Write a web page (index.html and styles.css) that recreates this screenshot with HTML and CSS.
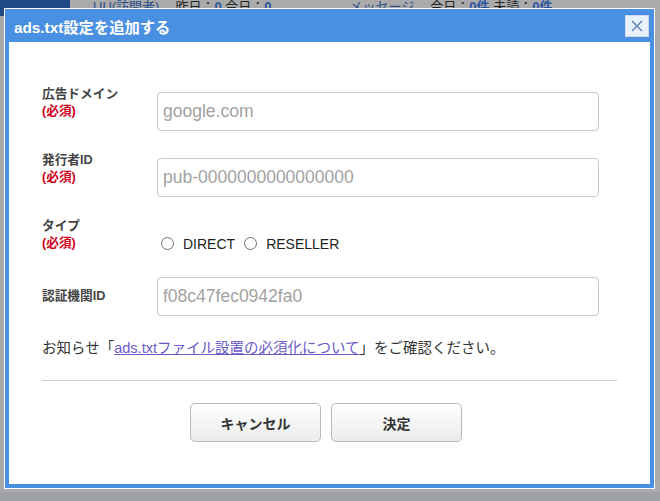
FILE: index.html
```html
<!DOCTYPE html>
<html lang="ja">
<head>
<meta charset="utf-8">
<title>ads.txt設定を追加する</title>
<link rel="stylesheet" href="styles.css">
</head>
<body>
<div class="page">
  <div class="topbar">
    <div class="brand"></div>
    <div class="stat stat-uu"><a class="stat-link">UU(訪問者)</a><span class="stat-val">昨日：<b>0</b> 今日：<b>0</b></span></div>
    <div class="stat stat-msg"><a class="stat-link">メッセージ</a><span class="stat-val">今日：<b>0件</b> 未読：<b>0件</b></span></div>
  </div>
  <div class="page-body"></div>
  <div class="footer-band"></div>
</div>

<div class="dialog">
  <div class="dialog-header">
    <div class="dialog-title">ads.txt設定を追加する</div>
    <button class="dialog-close" aria-label="閉じる">
      <svg width="12" height="12" viewBox="0 0 12 12"><path d="M1 1L11 11M11 1L1 11" stroke="#5f87b7" stroke-width="1.5" fill="none"/></svg>
    </button>
  </div>
  <div class="dialog-body">
    <div class="form">
      <div class="form-row">
        <div class="field-label is-required">広告ドメイン<span class="req">(必須)</span></div>
        <input class="field-input" type="text" placeholder="google.com">
      </div>
      <div class="form-row">
        <div class="field-label is-required">発行者ID<span class="req">(必須)</span></div>
        <input class="field-input" type="text" placeholder="pub-0000000000000000">
      </div>
      <div class="form-row type-row">
        <div class="field-label is-required">タイプ<span class="req">(必須)</span></div>
        <div class="radio-group">
          <label class="radio-option"><input class="radio" type="radio" name="type">DIRECT</label>
          <label class="radio-option"><input class="radio" type="radio" name="type">RESELLER</label>
        </div>
      </div>
      <div class="form-row last">
        <div class="field-label">認証機関ID</div>
        <input class="field-input" type="text" placeholder="f08c47fec0942fa0">
      </div>
    </div>
    <p class="notice">お知らせ「<a class="notice-link" href="#">ads.txtファイル設置の必須化について</a>」をご確認ください。</p>
    <hr class="divider">
    <div class="actions">
      <button class="btn">キャンセル</button>
      <button class="btn">決定</button>
    </div>
  </div>
</div>
</body>
</html>
```

FILE: styles.css
```css
html, body {
  margin: 0;
  padding: 0;
}

body {
  width: 660px;
  height: 501px;
  overflow: hidden;
  position: relative;
  background: #aaaaaa;
  font-family: "Liberation Sans", "Noto Sans CJK JP", sans-serif;
}

.page {
  height: 501px;
  display: flex;
  flex-direction: column;
}

.topbar {
  height: 16px;
  display: flex;
  align-items: flex-start;
  font-size: 13px;
  line-height: 14px;
  white-space: nowrap;
}

.brand {
  width: 70px;
  height: 16px;
  background: #1f4a86;
}

.stat-uu {
  margin-left: 23px;
}

.stat-msg {
  margin-left: 78px;
}

.stat-link {
  color: #2c4f88;
  text-decoration: underline;
}

.stat-val {
  margin-left: 16px;
  color: #222;
}

.stat-val b {
  color: #2a55a0;
  font-weight: bold;
}

.page-body {
  flex: 1;
}

.footer-band {
  height: 9px;
  background: #9da1a5;
}

/* dialog */
.dialog {
  position: absolute;
  left: 4px;
  top: 8px;
  width: 651px;
  height: 481px;
  box-sizing: border-box;
  border: 1px solid #ffffff;
  background: #4a90e2;
  padding: 0 4px 4px;
  display: flex;
  flex-direction: column;
}

.dialog-header {
  height: 33px;
  flex: none;
  display: flex;
  align-items: center;
  justify-content: space-between;
  padding-left: 5px;
}

.dialog-title {
  color: #ffffff;
  font-size: 15.3px;
  font-weight: bold;
}

.dialog-close {
  width: 24px;
  height: 22px;
  margin-right: 1px;
  padding: 0;
  box-sizing: border-box;
  border: 1px solid #cddbeb;
  background: #e8f0fa;
  display: flex;
  align-items: center;
  justify-content: center;
}

.dialog-body {
  flex: 1;
  background: #ffffff;
  padding: 50px 33px 0;
}

.form-row {
  display: flex;
  align-items: center;
  height: 39px;
  margin-bottom: 27px;
}

.form-row.type-row {
  margin-bottom: 14px;
}

.form-row.last {
  margin-bottom: 0;
}

.field-label {
  width: 115px;
  flex: none;
  font-size: 12.7px;
  line-height: 17px;
  font-weight: bold;
  color: #444444;
}

.field-label.is-required {
  align-self: flex-start;
  margin-top: -6px;
}

.req {
  display: block;
  color: #d0021b;
}

.field-input {
  width: 442px;
  height: 39px;
  box-sizing: border-box;
  margin: 0;
  border: 1px solid #c9c9c9;
  border-radius: 4px;
  padding: 0 5px;
  font-family: "Liberation Sans", sans-serif;
  font-size: 17.5px;
  color: #333333;
  background: #ffffff;
}

.field-input::placeholder {
  color: #a2a2a2;
}

.radio-group {
  display: flex;
  align-items: center;
  font-size: 14px;
  color: #222222;
}

.radio-option {
  display: flex;
  align-items: center;
  margin-left: 9px;
}

.radio-option:first-child {
  margin-left: 4px;
}

.radio {
  appearance: none;
  -webkit-appearance: none;
  width: 13px;
  height: 13px;
  margin: 0 9px 0 0;
  box-sizing: border-box;
  border: 1px solid #6e6e6e;
  border-radius: 50%;
  background: #ffffff;
}

.notice {
  margin: 22px 0 0;
  font-size: 14.5px;
  line-height: 20px;
  color: #333333;
}

.notice-link {
  color: #6a5ac6;
  text-decoration: underline;
}

.divider {
  margin: 22px 0 0;
  height: 0;
  border: 0;
  border-top: 1px solid #d0d0d0;
}

.actions {
  display: flex;
  justify-content: center;
  gap: 10px;
  margin-top: 22px;
  padding-right: 7px;
}

.btn {
  width: 131px;
  height: 39px;
  box-sizing: border-box;
  border: 1px solid #b8b8b8;
  border-radius: 5px;
  background: linear-gradient(#ffffff, #ebebeb);
  font-family: "Liberation Sans", "Noto Sans CJK JP", sans-serif;
  font-size: 14px;
  font-weight: bold;
  color: #333333;
}
```
